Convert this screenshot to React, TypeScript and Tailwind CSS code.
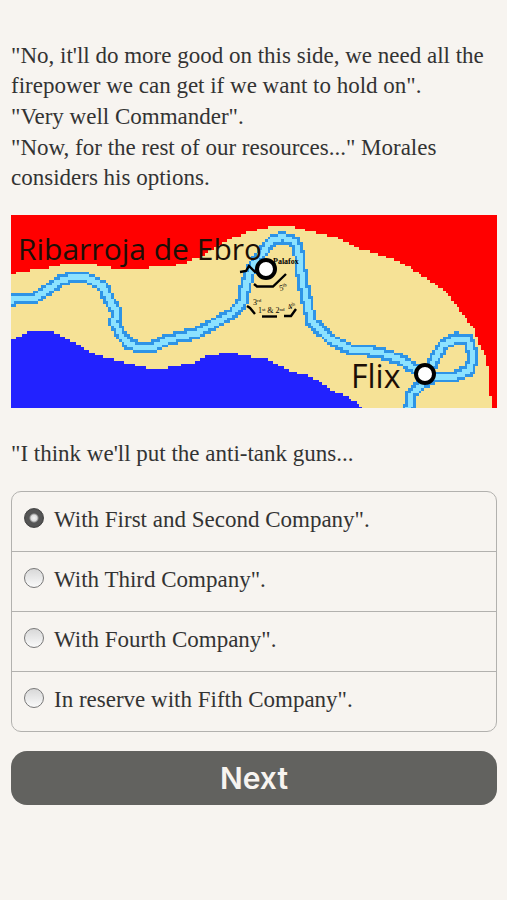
import { useState } from "react";

type Point = [number, number];

const MAP_WIDTH = 486;
const MAP_HEIGHT = 193;
const CELL = 2.7;

const northFront: Point[] = [
  [0, 61], [11, 56], [34, 54], [56, 48], [77, 48], [96, 52], [114, 55], [129, 53], [157, 52],
  [174, 48], [192, 40], [204, 33], [217, 25], [237, 17], [257, 12], [284, 12], [307, 18],
  [324, 22], [344, 32], [379, 43], [399, 53], [434, 76], [452, 100], [464, 115], [469, 130],
  [475, 143], [478, 160], [480, 193], [486, 400],
];

const southFront: Point[] = [
  [0, 125], [6, 123], [11, 119], [19, 117], [41, 117], [52, 122], [69, 131], [86, 140],
  [112, 147], [136, 153], [154, 153], [184, 147], [197, 141], [217, 137], [234, 141],
  [254, 143], [269, 151], [282, 157], [296, 160], [309, 167], [321, 175], [339, 183],
  [351, 193], [486, 300],
];

const ebro: Point[] = [
  [-5, 86], [7, 84], [24, 83], [36, 75], [49, 66], [62, 62], [76, 63], [92, 71], [97, 83],
  [106, 97], [103, 107], [110, 120], [119, 130], [132, 133], [144, 131], [156, 125],
  [186, 118], [204, 108], [222, 98], [231, 87], [234, 72], [240, 55], [251, 37], [262, 25],
  [272, 22], [284, 27], [288, 40], [291, 63], [296, 87], [301, 107], [319, 124], [339, 134],
  [366, 137], [386, 143], [414, 159], [422, 147], [432, 130], [446, 123], [457, 125],
  [462, 140], [459, 155], [442, 162], [422, 163], [412, 168], [401, 178], [397, 198],
];

function heightAt(line: Point[], x: number) {
  for (let i = 1; i < line.length; i++) {
    const [x0, y0] = line[i - 1];
    const [x1, y1] = line[i];
    if (x <= x1) return y0 + ((y1 - y0) * (x - x0)) / (x1 - x0);
  }
  return line[line.length - 1][1];
}

function distanceTo(line: Point[], x: number, y: number) {
  let best = Infinity;
  for (let i = 1; i < line.length; i++) {
    const [x0, y0] = line[i - 1];
    const dx = line[i][0] - x0;
    const dy = line[i][1] - y0;
    const t = Math.max(0, Math.min(1, ((x - x0) * dx + (y - y0) * dy) / (dx * dx + dy * dy)));
    best = Math.min(best, Math.hypot(x - x0 - t * dx, y - y0 - t * dy));
  }
  return best;
}

function terrainAt(x: number, y: number) {
  const river = distanceTo(ebro, x, y);
  if (river < 2.8) return "#8ce2ff";
  if (river < 5.9) return "#2e94e6";
  if (y < heightAt(northFront, x)) return "#ff0000";
  if (y > heightAt(southFront, x)) return "#2222ff";
  return "#f6e296";
}

// Collects each terrain colour into one path made of horizontal runs of map cells.
function buildTerrain() {
  const paths: Record<string, string> = {};
  const columns = Math.ceil(MAP_WIDTH / CELL);
  const rows = Math.ceil(MAP_HEIGHT / CELL);
  for (let row = 0; row < rows; row++) {
    let start = 0;
    let current = terrainAt(CELL / 2, (row + 0.5) * CELL);
    for (let column = 1; column <= columns; column++) {
      const next = column < columns ? terrainAt((column + 0.5) * CELL, (row + 0.5) * CELL) : "";
      if (next !== current) {
        const width = column - start;
        paths[current] = (paths[current] ?? "") + `M${start} ${row}h${width}v1h-${width}z`;
        start = column;
        current = next;
      }
    }
  }
  return Object.entries(paths);
}

const terrain = buildTerrain();

function BattleMap() {
  return (
    <svg
      viewBox={`0 0 ${MAP_WIDTH} ${MAP_HEIGHT}`}
      role="img"
      aria-label="Map of the Ebro between Ribarroja and Flix"
      className="block h-auto w-full"
    >
      <g transform={`scale(${CELL})`} shapeRendering="crispEdges">
        {terrain.map(([colour, d]) => (
          <path key={colour} d={d} fill={colour} />
        ))}
      </g>
      <g className="fill-[#1c0f06] font-['Open_Sans',sans-serif]">
        <text x="7" y="45" fontSize="30">Ribarroja de Ebro</text>
        <text x="340" y="173" fontSize="32">Flix</text>
      </g>
      <g fill="none" stroke="#000" strokeWidth="2.4">
        <path d="M229 57L235 56L238 51L244 57L250 55" />
        <path d="M243 69L246 71.5H262L275 59" />
        <path d="M236 91L239 93L244 99" />
        <path d="M251 101.500H266" />
        <path d="M273 101H280L285 94" />
      </g>
      <g fill="#fff" stroke="#000" strokeWidth="4">
        <circle cx="255" cy="54" r="9" />
        <circle cx="414" cy="159" r="9" />
      </g>
      <g className="fill-black font-['Liberation_Serif',serif]">
        <text x="262" y="49" fontSize="8" fontWeight="700">Palafox</text>
        <g fontSize="8">
          <text x="242" y="90">3<tspan dy="-3" fontSize="5">rd</tspan></text>
          <text x="269" y="76" transform="rotate(-15 269 76)">5<tspan dy="-3" fontSize="5">th</tspan></text>
          <text x="247" y="98">
            1<tspan dy="-2" fontSize="5">st</tspan><tspan dy="2"> &amp; 2</tspan><tspan dy="-2" fontSize="5">nd</tspan>
          </text>
          <text x="278" y="95" transform="rotate(-25 278 95)">4<tspan dy="-2" fontSize="5">th</tspan></text>
        </g>
      </g>
    </svg>
  );
}

const options = [
  "With First and Second Company\".",
  "With Third Company\".",
  "With Fourth Company\".",
  "In reserve with Fifth Company\".",
];

export default function App() {
  const [selected, setSelected] = useState(0);

  return (
    <main className="min-h-screen bg-[#f7f4f0] pt-[41px] pr-[10px] pb-24 pl-[11px] font-['Palatino','Palatino_Linotype','Liberation_Serif',serif] text-[23px] leading-[30px] text-[#333]">
      <div className="flex flex-col gap-px">
        <p>"No, it'll do more good on this side, we need all the firepower we can get if we want to hold on".</p>
        <p>"Very well Commander".</p>
        <p>"Now, for the rest of our resources..." Morales considers his options.</p>
      </div>

      <div className="mt-[22px]">
        <BattleMap />
      </div>

      <form className="mt-[31px]" onSubmit={(event) => event.preventDefault()}>
        <fieldset>
          <legend>"I think we'll put the anti-tank guns...</legend>
          <div className="mt-[22px] divide-y divide-[#b2b1ae] rounded-[10px] border border-[#b2b1ae]">
            {options.map((option, index) => (
              <label key={option} className="box-content flex h-[59px] items-center gap-[10px] px-3">
                <input
                  type="radio"
                  name="placement"
                  checked={selected === index}
                  onChange={() => setSelected(index)}
                  className="mb-2 size-5 shrink-0 appearance-none rounded-full border border-[#777] bg-linear-to-b from-[#d8d8d8] to-[#fafafa] checked:border-[#444] checked:bg-[radial-gradient(circle,#f4f4f4_0px,#dddddd_3px,#555555_5px,#555555_8px,#444444_10px)]"
                />
                <span className="mb-1">{option}</span>
              </label>
            ))}
          </div>
        </fieldset>
        <button
          type="submit"
          className="mt-[19px] block h-[54px] w-full rounded-2xl bg-[#62625f] font-['Inter',sans-serif] text-[30px] font-semibold text-[#f7f4f0]"
        >
          Next
        </button>
      </form>
    </main>
  );
}
